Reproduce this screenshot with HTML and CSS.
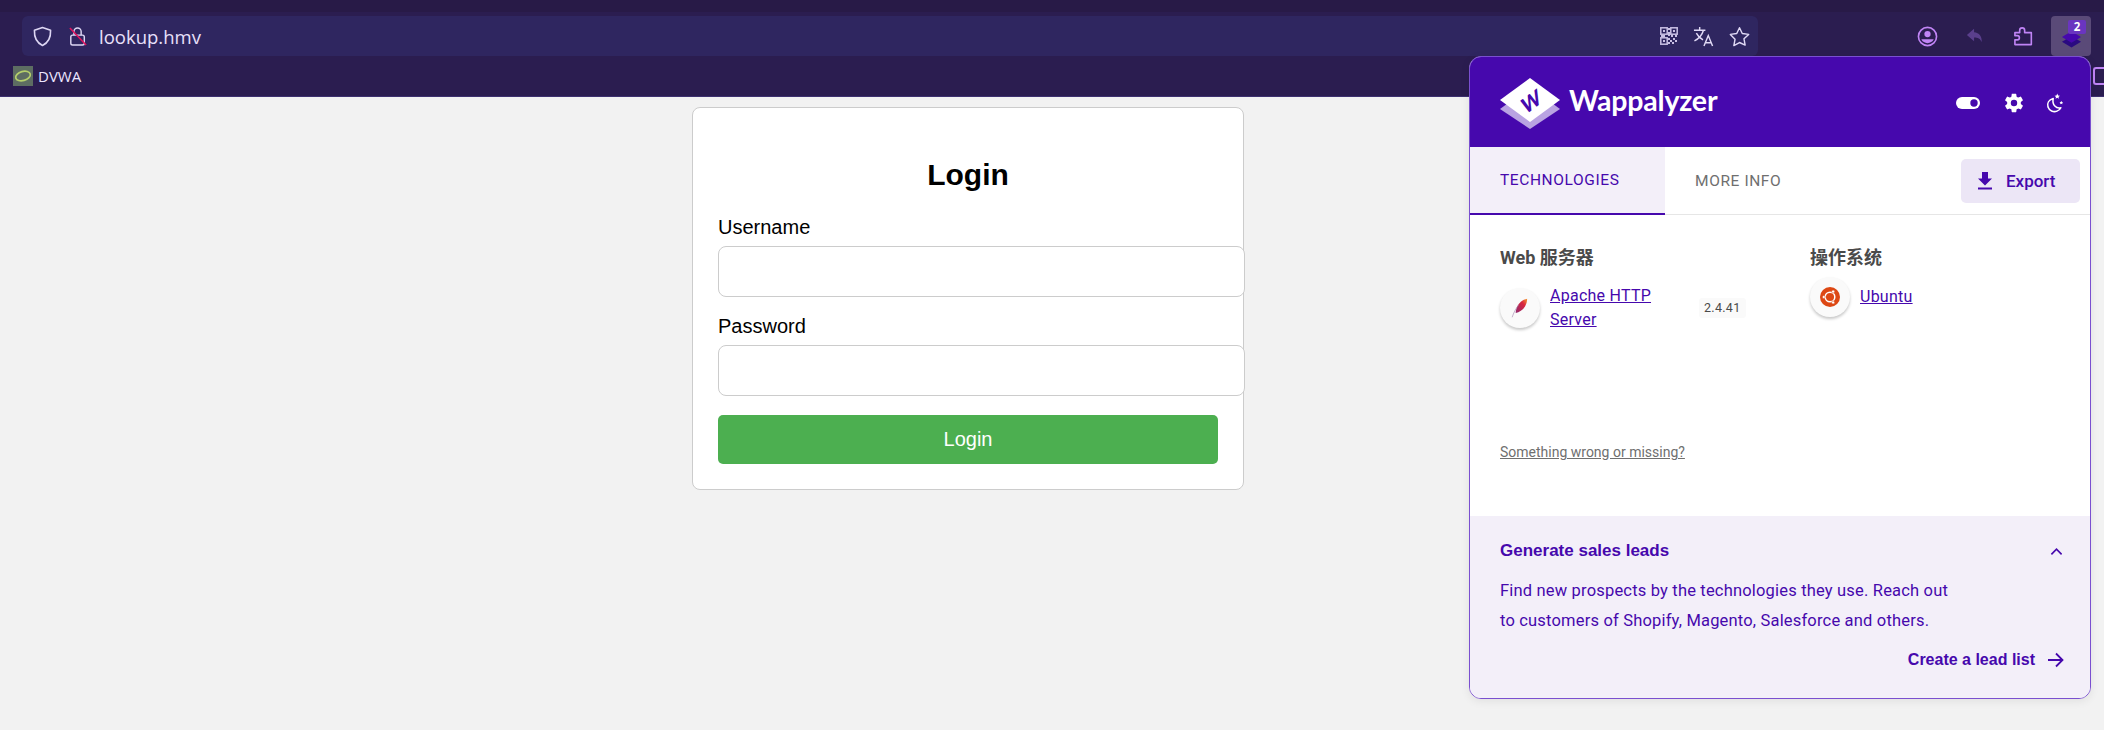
FILE: index.html
```html
<!DOCTYPE html>
<html lang="en">
<head>
<meta charset="utf-8">
<title>Login</title>
<link rel="stylesheet" href="styles.css">
</head>
<body>
<header class="browser">
  <div class="tabstrip"></div>
  <div class="toolbar">
    <div class="omnibox">
      <svg class="ico shield" viewBox="0 0 20 22"><path d="M10 1.5 18.5 4.5c.3 7-1.8 12.8-8.5 16-6.700-3.200-8.800-9-8.500-16Z" fill="none" stroke="#ddd6f3" stroke-width="1.700" stroke-linejoin="round"/></svg>
      <svg class="ico lock" viewBox="0 0 20 22"><rect x="2" y="9.500" width="15" height="11" rx="2" fill="none" stroke="#ddd6f3" stroke-width="1.600"/><path d="M5.500 9.500V5.500a4 4 0 0 1 8 0v4" fill="none" stroke="#ddd6f3" stroke-width="1.600"/><path d="M1 1.500 19 20.500" stroke="#e0155f" stroke-width="1.800"/></svg>
      <span class="url">lookup.hmv</span>
      <span class="omni-actions">
        <svg class="ico qr" viewBox="0 0 18 18"><g fill="none" stroke="#c9c0e4" stroke-width="1.500"><rect x=".8" y=".8" width="6.400" height="6.400"/><rect x="10.800" y=".8" width="6.400" height="6.400"/><rect x=".8" y="10.800" width="6.400" height="6.400"/></g><g fill="#c9c0e4"><rect x="3" y="3" width="2" height="2"/><rect x="13" y="3" width="2" height="2"/><rect x="3" y="13" width="2" height="2"/><rect x="8" y="1" width="2" height="2"/><rect x="8" y="5" width="2" height="4"/><rect x="1" y="8" width="4" height="2"/><rect x="11" y="8" width="2" height="2"/><rect x="15" y="8" width="2" height="2"/><rect x="8" y="11" width="2" height="2"/><rect x="10" y="13" width="2" height="2"/><rect x="13" y="11" width="2" height="2"/><rect x="15" y="13" width="2" height="2"/><rect x="8" y="15" width="2" height="2"/><rect x="12" y="15" width="2" height="2"/></g></svg>
        <svg class="ico tr" viewBox="0 0 22 22"><g fill="none" stroke="#e0d9f5" stroke-width="1.500"><path d="M1 4.500h12M7 1v3.500M11 4.500C9.500 9.500 6 13.500 1.500 15.500M3.500 7.500c1.500 3 4 5.500 7 7"/><path d="M11.500 21 16 10l4.500 11M13 17.500h6"/></g></svg>
        <svg class="ico star" viewBox="0 0 22 22"><path d="M11 1.800 13.900 7.900l6.700.9-4.900 4.600 1.200 6.600L11 17.300 5.100 20.500l1.200-6.600L1.400 8.800l6.700-.9Z" fill="none" stroke="#e0d9f5" stroke-width="1.500" stroke-linejoin="round"/></svg>
      </span>
    </div>
    <div class="actions">
      <span class="act"><svg class="ico act-i" viewBox="0 0 22 22"><circle cx="11" cy="11" r="9.500" fill="none" stroke="#c084f5" stroke-width="1.700"/><circle cx="11" cy="8.500" r="3.300" fill="#c084f5"/><path d="M4.500 14h13c-1.200 2.600-3.700 4-6.500 4s-5.300-1.400-6.500-4Z" fill="#c084f5"/></svg></span>
      <span class="act"><svg class="ico act-i" viewBox="0 0 22 22"><path d="M9.500 3 2 9.500l7.500 6.500v-4c4 0 6.500 1 8 5 .5-6-2.500-10-8-10.500Z" fill="#5a3f8c"/></svg></span>
      <span class="act"><svg class="ico act-i" viewBox="0 0 22 22"><path d="M2 7.500h5V5a2.600 2.600 0 0 1 5.200 0v2.500h7v12.500H2v-5h2.500a2.200 2.200 0 0 0 0-4.400H2Z" transform="translate(0 -.5)" fill="none" stroke="#c084f5" stroke-width="1.700" stroke-linejoin="round"/></svg></span>
      <span class="act act-on">
        <svg class="wp-mini" viewBox="0 0 22 18"><path d="M11 6 21 12 11 18 1 12Z" fill="#2a0a80"/><path d="M11 1 21 7 11 13 1 7Z" fill="#4608ad"/></svg>
        <span class="badge">2</span>
      </span>
    </div>
  </div>
  <div class="bookmarks">
    <span class="favicon"><svg viewBox="0 0 20 20"><ellipse cx="10" cy="10" rx="7.500" ry="4.500" transform="rotate(-15 10 10)" fill="none" stroke="#b5cf6b" stroke-width="1.700"/></svg></span>
    <span class="bm-label">DVWA</span>
    <span class="bm-edge"></span>
  </div>
</header>

<main class="page">
  <form class="card">
    <h2 class="card-title">Login</h2>
    <label class="field-label">Username</label>
    <input class="field" type="text">
    <label class="field-label">Password</label>
    <input class="field" type="password">
    <button class="submit" type="button">Login</button>
  </form>
</main>

<aside class="popup">
  <div class="pop-head">
    <svg class="logo" viewBox="0 0 60 52"><path d="M30 9 60 31 30 51 0 31Z" fill="#b9a3e2"/><path d="M30 0 60 22 30 44 0 22Z" fill="#fff"/><text class="logo-w" x="0" y="0" transform="translate(31 23) rotate(-37) skewX(-16)" text-anchor="middle" dominant-baseline="central">W</text></svg>
    <span class="brand">Wappalyzer</span>
    <span class="head-icons">
      <svg class="toggle" viewBox="0 0 24 12"><rect width="24" height="12" rx="6" fill="#fff"/><circle cx="18" cy="6" r="3.700" fill="#4608ad"/></svg>
      <svg class="gear" viewBox="0 0 24 24"><path fill="#fff" d="M12 15.500A3.500 3.500 0 1 1 12 8.500a3.500 3.500 0 0 1 0 7Zm7.430-2.530c.04-.32.07-.64.07-.97s-.03-.66-.07-1l2.110-1.630c.19-.15.24-.42.12-.64l-2-3.460c-.12-.22-.39-.31-.61-.22l-2.490 1c-.52-.39-1.060-.73-1.690-.98l-.37-2.650A.506.506 0 0 0 14 2h-4c-.25 0-.46.18-.5.420l-.37 2.650c-.63.25-1.170.59-1.690.98l-2.490-1c-.22-.09-.49 0-.61.22l-2 3.460c-.13.22-.07.49.12.64L4.570 11c-.04.34-.07.67-.07 1s.03.65.07.97l-2.110 1.660c-.19.15-.25.42-.12.64l2 3.460c.12.22.39.3.61.22l2.490-1.010c.52.4 1.060.74 1.690.99l.37 2.650c.04.24.25.42.5.42h4c.25 0 .46-.18.5-.42l.37-2.650c.63-.26 1.170-.59 1.690-.99l2.490 1.010c.22.08.49 0 .61-.22l2-3.460c.12-.22.07-.49-.12-.64l-2.110-1.660Z"/></svg>
      <svg class="moon" viewBox="0 0 20 22"><path d="M8 5.500C3 7 1 11 2.200 15c1.400 4 6 6 10 4.500 2-.8 3.500-2 4.300-3.800-5 1.300-10-3-8.500-10.200Z" fill="none" stroke="#fff" stroke-width="1.700" stroke-linejoin="round"/><path d="M12.500 0l.9 2.100 2.100.2-1.600 1.400.5 2.100-1.900-1.100-1.900 1.100.5-2.100-1.600-1.400 2.100-.2Z" fill="#fff"/><path d="M17 8l.6 1.300 1.400.2-1 1 .3 1.400-1.300-.7-1.300.7.300-1.400-1-1 1.400-.2Z" fill="#fff"/></svg>
    </span>
  </div>
  <nav class="tabs">
    <span class="tab tab-on">Technologies</span>
    <span class="tab">More info</span>
    <span class="export">
      <svg class="export-i" viewBox="0 0 14 18"><path d="M4 0h6v6.500h4L7 13.500 0 6.500h4Z" fill="#4608ad"/><rect y="15.500" width="14" height="2" fill="#4608ad"/></svg>
      Export
    </span>
  </nav>
  <section class="techs">
    <div class="tech-grid">
      <div class="tech-col">
        <h3 class="cat">Web <span class="cjk">服务器</span></h3>
        <div class="tech tech-a">
          <span class="tech-icon"><svg viewBox="0 0 24 28"><defs><linearGradient id="fe" x1="1" y1="0" x2="0" y2="1"><stop offset="0" stop-color="#f69d2c"/><stop offset=".35" stop-color="#d9263f"/><stop offset="1" stop-color="#8f2a6f"/></linearGradient></defs><path d="M22 1c-6 1-11 5-14 11-1 3-2 6-2 9 5-1 10-4 13-9 2-4 3-7 3-11Z" fill="url(#fe)"/><path d="M1 27c2-6 5-12 9-17" fill="none" stroke="#a58ab0" stroke-width=".9"/></svg></span>
          <a class="tech-link tech-wrap">Apache HTTP Server</a>
          <span class="ver">2.4.41</span>
        </div>
      </div>
      <div class="tech-col">
        <h3 class="cat cjk">操作系统</h3>
        <div class="tech tech-b">
          <span class="tech-icon"><svg viewBox="0 0 20 20"><circle cx="10" cy="10" r="10" fill="#dd4814"/><circle cx="10" cy="10" r="4.800" fill="none" stroke="#fff" stroke-width="1.500"/><circle cx="3.800" cy="10" r="1.500" fill="#fff" stroke="#dd4814" stroke-width=".5"/><circle cx="13.100" cy="4.600" r="1.500" fill="#fff" stroke="#dd4814" stroke-width=".5"/><circle cx="13.100" cy="15.400" r="1.500" fill="#fff" stroke="#dd4814" stroke-width=".5"/></svg></span>
          <a class="tech-link">Ubuntu</a>
        </div>
      </div>
    </div>
    <a class="wrong">Something wrong or missing?</a>
  </section>
  <section class="leads">
    <div class="leads-head">
      <strong class="leads-title">Generate sales leads</strong>
      <svg class="chev" viewBox="0 0 14 9"><path d="M1.500 7.500 7 2l5.500 5.500" fill="none" stroke="#4608ad" stroke-width="1.800"/></svg>
    </div>
    <p class="leads-text">Find new prospects by the technologies they use. Reach out<br>to customers of Shopify, Magento, Salesforce and others.</p>
    <div class="leads-foot">
      <strong class="leads-cta">Create a lead list</strong>
      <svg class="arrow" viewBox="0 0 16 16"><path d="M0 8h14.500M8 1.500 14.500 8 8 14.500" fill="none" stroke="#4608ad" stroke-width="1.800"/></svg>
    </div>
  </section>
</aside>
</body>
</html>
```
FILE: styles.css
```css
* { box-sizing: border-box; }
html, body { margin: 0; padding: 0; }
body {
  height: 730px;
  overflow: hidden;
  background: #f2f2f2;
  font-family: "Liberation Sans", Arial, sans-serif;
  position: relative;
}
.ico { display: block; flex: none; }

/* browser chrome */
.browser { background: #2b1d50; border-bottom: 1px solid #3d3070; }
.tabstrip { height: 12px; background: #281a47; }
.toolbar { height: 44px; display: flex; align-items: flex-start; padding: 4px 13px 0 22px; }
.omnibox {
  width: 1736px; height: 40px; background: #2f2660; border-radius: 6px;
  display: flex; align-items: center; padding: 0 8px 0 11px; color: #e8e0fb;
}
.shield { width: 19px; height: 21px; }
.lock { width: 18px; height: 21px; margin-left: 17px; }
.url { font: 18.500px "Open Sans", "Noto Sans", sans-serif; margin-left: 12px; }
.omni-actions { margin-left: auto; display: flex; align-items: center; gap: 15px; }
.qr { width: 18px; height: 18px; }
.tr { width: 21px; height: 21px; }
.star { width: 21px; height: 21px; }
.actions { margin-left: auto; display: flex; gap: 8px; }
.act { width: 40px; height: 40px; display: flex; align-items: center; justify-content: center; border-radius: 4px; position: relative; }
.act-i { width: 21px; height: 21px; }
.act-on { background: #5a4a78; }
.wp-mini { width: 21px; height: 18px; margin-top: 5px; }
.badge {
  position: absolute; top: 4px; right: 5px; width: 18px; height: 14px;
  background: #6a35c0; border-radius: 2px; color: #fff;
  font: 700 11.500px/14px "Open Sans", sans-serif; text-align: center;
}
.bookmarks { height: 40px; display: flex; align-items: center; padding-left: 13px; position: relative; }
.favicon { width: 20px; height: 20px; background: #5d6d62; display: block; }
.favicon svg { display: block; }
.bm-label { font: 15px "Open Sans", "Noto Sans", sans-serif; color: #ece6ff; margin-left: 5px; }
.bm-edge { margin-left: auto; width: 11px; height: 18px; border: 2px solid #c084f5; border-right: 0; border-radius: 3px 0 0 3px; }

/* login page */
.page { padding: 10px 0 0 692px; }
.card {
  width: 552px; background: #fff; border: 1px solid #ccc; border-radius: 8px;
  padding: 25px; display: flex; flex-direction: column; align-items: flex-start;
}
.card-title { align-self: stretch; text-align: center; margin: 25px 0 24px; font-size: 30px; line-height: 34px; font-weight: 700; color: #000; }
.field-label { font-size: 20px; line-height: 23px; color: #000; margin-bottom: 7px; }
.field {
  flex: none; width: 527px; height: 51px; margin: 0 0 18px; padding: 12px;
  border: 1px solid #ccc; border-radius: 8px; background: #fff;
}
.submit {
  width: 500px; height: 49px; margin-top: 1px; border: 0; border-radius: 5px;
  background: #4caf50; color: #fff; font: 20px "Liberation Sans", Arial, sans-serif;
}

/* popup */
.popup {
  position: absolute; left: 1469px; top: 56px; width: 622px; height: 643px;
  background: #fff; border: 1px solid #7a4fd0; border-radius: 12px; overflow: hidden;
  display: flex; flex-direction: column; box-shadow: 0 2px 10px rgba(0,0,0,.08);
  font-family: Roboto, sans-serif;
}
.pop-head { height: 90px; background: #4608ad; display: flex; align-items: flex-start; padding: 21px 26px 0 30px; flex: none; color: #fff; }
.logo { width: 60px; height: 52px; flex: none; }
.logo-w { font: 900 20px Lato, sans-serif; fill: #4608ad; }
.brand { font: 700 28.500px/44px Lato, sans-serif; margin-left: 9px; letter-spacing: -.2px; }
.head-icons { margin-left: auto; display: flex; align-items: center; height: 50px; }
.toggle { width: 24px; height: 12px; }
.gear { width: 22px; height: 22px; margin-left: 23px; }
.moon { width: 18px; height: 21px; margin-left: 21px; }

.tabs { height: 68px; display: flex; align-items: stretch; flex: none; border-bottom: 1px solid #e6e6e6; padding-right: 10px; }
.tab {
  display: flex; align-items: center; padding: 0 29px 0 30px; text-transform: uppercase;
  font-size: 15.500px; letter-spacing: .6px; color: #6f6f6f;
}
.tab-on { width: 195px; color: #4608ad; background: #f3eff9; border-bottom: 2px solid #4608ad; margin-bottom: -1px; }
.export {
  margin: 12px 0 11px auto; width: 119px; background: #ece6f6; border-radius: 5px; color: #4608ad;
  display: flex; align-items: center; padding-left: 17px; gap: 14px; font-weight: 500; font-size: 17px;
}
.export-i { width: 14px; height: 18px; }

.techs { flex: 1; padding: 30px 30px 0; display: flex; flex-direction: column; }
.tech-grid { display: grid; grid-template-columns: 310px 1fr; flex: none; height: 182px; }
.cat { margin: 0; font-size: 18px; line-height: 22px; font-weight: 700; color: #4a4a4a; font-family: Roboto, "Noto Sans CJK SC", sans-serif; }
.cjk { font-family: "Noto Sans CJK SC", sans-serif; }
.tech { display: flex; align-items: center; }
.tech-a { margin-top: 15px; }
.tech-b { margin-top: 10px; }
.tech-icon {
  width: 40px; height: 40px; flex: none; border-radius: 50%; background: #fafafa;
  box-shadow: 0 2px 3px rgba(0,0,0,.22); display: flex; align-items: center; justify-content: center;
}
.tech-icon svg { width: 20px; height: 20px; display: block; }
.tech-link { font-size: 16px; line-height: 24px; color: #4608ad; text-decoration: underline; margin-left: 10px; letter-spacing: .25px; }
.tech-wrap { width: 122px; }
.ver { margin-left: 27px; height: 20px; padding: 0 5px; background: #fafafa; border-radius: 3px; font-size: 12.500px; line-height: 20px; color: #4a4a4a; letter-spacing: .3px; }
.wrong { margin-top: 16px; font-size: 14px; line-height: 18px; color: #6f6f6f; text-decoration: underline; }

.leads { height: 182px; flex: none; background: #f3eff9; padding: 23px 26px 0 30px; color: #4608ad; }
.leads-head { display: flex; align-items: center; justify-content: space-between; height: 24px; }
.leads-title { font: 700 17px/24px "Liberation Sans", Arial, sans-serif; }
.chev { width: 13px; height: 9px; margin-right: 1px; }
.leads-text { margin: 13px 0 0; font-size: 16.500px; line-height: 30px; letter-spacing: .18px; }
.leads-foot { display: flex; justify-content: flex-end; align-items: center; gap: 13px; margin-top: 12px; }
.leads-cta { font: 700 16px/24px "Liberation Sans", Arial, sans-serif; }
.arrow { width: 16px; height: 16px; }
```
